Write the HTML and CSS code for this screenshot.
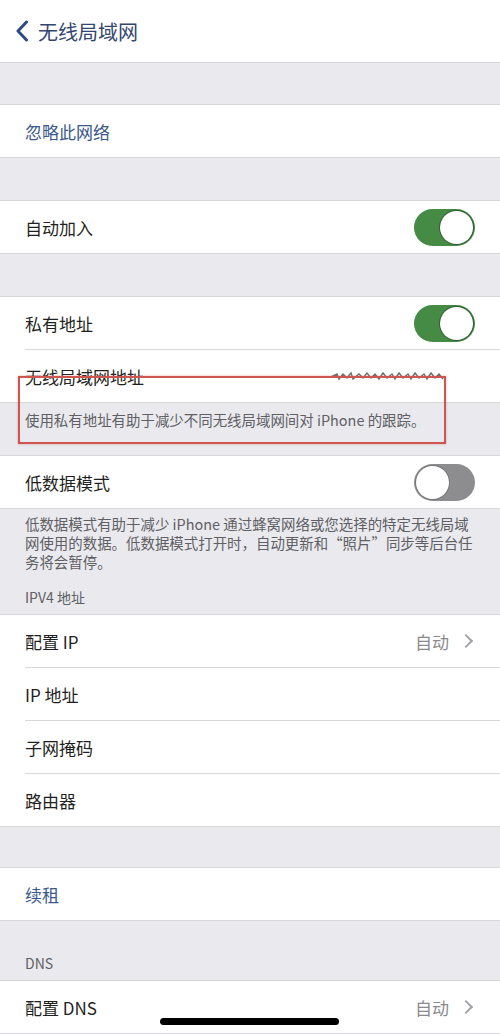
FILE: index.html
```html
<!DOCTYPE html>
<html lang="zh-CN">
<head>
    <meta charset="UTF-8">
    <meta name="viewport" content="width=device-width, initial-scale=1.0">
    <title>无线局域网</title>
    <link rel="stylesheet" href="styles.css">
</head>
<body>
    <div class="nav">
        <svg class="back" width="14" height="22" viewBox="0 0 14 22">
            <path d="M11.5 2 L3 11 L11.5 20" fill="none" stroke="#2e4a80" stroke-width="3" stroke-linecap="round" stroke-linejoin="round"/>
        </svg>
        <span class="nav-title">无线局域网</span>
    </div>

    <div class="gap"></div>
    <div class="group">
        <div class="row link">忽略此网络</div>
    </div>

    <div class="gap"></div>
    <div class="group">
        <div class="row">自动加入<span class="switch on"></span></div>
    </div>

    <div class="gap"></div>
    <div class="group">
        <div class="row">私有地址<span class="switch on"></span></div>
        <div class="row">无线局域网地址
            <svg class="masked" width="116" height="12" viewBox="0 0 116 12">
                <path d="M2 7 L8 4 L10 9 L14 4 L18 8 L22 3 L24 9 L30 4 L34 8 L38 3 L42 8 L46 4 L50 9 L54 3 L58 8 L63 4 L66 9 L70 3 L74 8 L79 4 L82 9 L86 3 L90 8 L95 4 L98 9 L102 3 L106 8 L110 4 L114 9" fill="none" stroke="#6e6e72" stroke-width="1.4"/>
            </svg>
        </div>
    </div>
    <div class="note short">使用私有地址有助于减少不同无线局域网间对 iPhone 的跟踪。</div>

    <div class="group">
        <div class="row">低数据模式<span class="switch"></span></div>
    </div>
    <div class="note">低数据模式有助于减少 iPhone 通过蜂窝网络或您选择的特定无线局域<br>网使用的数据。低数据模式打开时，自动更新和“照片”同步等后台任<br>务将会暂停。</div>
    <div class="section-title">IPV4 地址</div>

    <div class="group">
        <div class="row">配置 IP<span class="detail">自动<i class="chevron"></i></span></div>
        <div class="row">IP 地址</div>
        <div class="row">子网掩码</div>
        <div class="row">路由器</div>
    </div>

    <div class="gap narrow"></div>
    <div class="group">
        <div class="row link">续租</div>
    </div>

    <div class="section-title dns">DNS</div>
    <div class="group">
        <div class="row">配置 DNS<span class="detail">自动<i class="chevron"></i></span></div>
    </div>

    <!-- red frame drawn over the address row and its note -->
    <div class="mark"></div>
    <div class="home-bar"></div>
</body>
</html>
```

FILE: styles.css
```css
body {
    margin: 0;
    width: 500px;
    height: 1034px;
    overflow: hidden;
    position: relative;
    background-color: #e9e9ee;
    color: #1f1f22;
    font-family: "Noto Sans CJK SC", "Noto Sans", sans-serif;
}
.nav {
    display: flex;
    align-items: center;
    height: 62px;
    padding-left: 15px;
    background: white;
    border-bottom: 1px solid #d6d6db;
}
.back {
    display: block;
}
.nav-title {
    margin-left: 9px;
    font-size: 20px;
    color: #34466e;
}
.gap {
    height: 41px;
}
.group {
    background: white;
    border-top: 1px solid #d6d6db;
    border-bottom: 1px solid #d6d6db;
}
.group + .gap {
    height: 42px;
}
.group + .gap.narrow {
    height: 40px;
}
.row {
    display: flex;
    align-items: center;
    justify-content: space-between;
    height: 52px;
    margin-left: 25px;
    padding-right: 25px;
    font-size: 17px;
}
.row + .row {
    border-top: 1px solid #d6d6db;
}
.link {
    color: #3a5889;
}
.switch {
    position: relative;
    width: 61px;
    height: 37px;
    border-radius: 19px;
    background: #8d8d90;
}
.switch::after {
    content: "";
    position: absolute;
    top: 2px;
    left: 2px;
    width: 33px;
    height: 33px;
    border-radius: 50%;
    background: white;
    box-shadow: 0 0 0 1px rgba(0, 0, 0, 0.15);
}
.switch.on {
    background: #458a45;
}
.switch.on::after {
    left: 26px;
    box-shadow: 0 0 0 1px rgba(0, 0, 0, 0.3);
}
.masked {
    margin-right: 30px;
}
.detail {
    display: flex;
    align-items: center;
    color: #8a8a8e;
}
.chevron {
    width: 8px;
    height: 8px;
    margin-left: 12px;
    margin-right: 4px;
    border-top: 2px solid #a4a4a8;
    border-right: 2px solid #a4a4a8;
    transform: rotate(45deg);
}
.note {
    padding: 5px 20px 0 25px;
    font-size: 14.45px;
    line-height: 19px;
    color: #5f5f64;
}
.note.short {
    height: 45px;
    padding-top: 7px;
}
.section-title {
    padding: 17px 25px 7px;
    font-size: 14px;
    line-height: 19px;
    color: #5f5f64;
}
.section-title.dns {
    padding-top: 33px;
}
.mark {
    position: absolute;
    left: 18px;
    top: 376px;
    width: 424px;
    height: 64px;
    border: 2.5px solid #cf5550;
    box-shadow: 0 0 2px rgba(207, 85, 80, 0.5);
}
.home-bar {
    position: absolute;
    left: 160px;
    top: 1018px;
    width: 179px;
    height: 7px;
    border-radius: 4px;
    background: #000;
}
```
